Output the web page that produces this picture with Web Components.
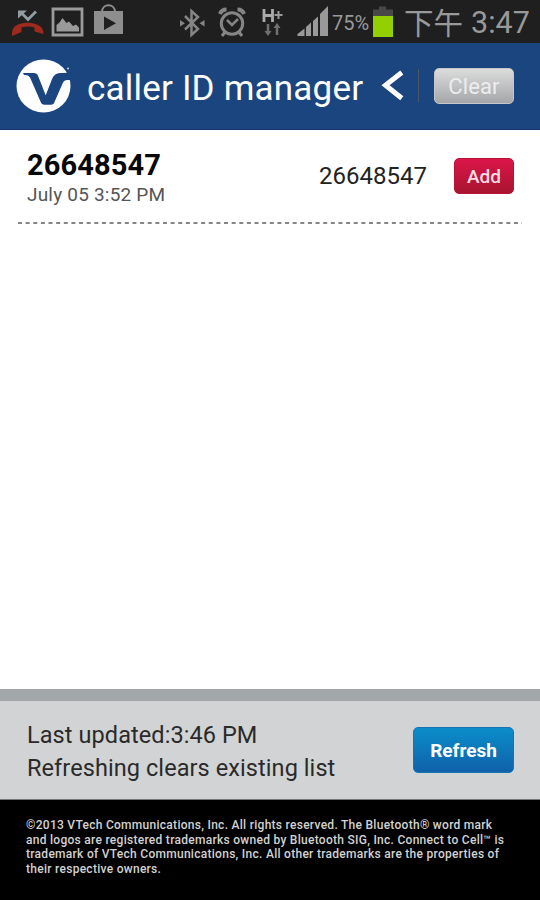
<!DOCTYPE html>
<html lang="en">
<head>
<meta charset="utf-8">
<title>caller ID manager</title>
<style>
body {
    margin: 0;
    background: #fff;
    font-family: Roboto, "Noto Sans CJK TC", sans-serif;
}
</style>
</head>
<body>
<phone-app></phone-app>

<script>
// STATUS BAR
var template_status = document.createElement("template");
template_status.innerHTML = `
<style>
:host {
    display: flex;
    align-items: center;
    justify-content: space-between;
    height: 43px;
    background: #1f1f1f;
    color: #999;
}
svg { display: block; }
.side { display: flex; align-items: center; height: 43px; }
.percent { font-size: 20px; width: 38px; margin-left: 2px; padding-top: 3px; white-space: nowrap; }
.battery { margin-left: 1px; }
.ampm { font-size: 29.5px; line-height: 43px; width: 59px; margin-left: 9px; white-space: nowrap; font-family: "Noto Sans CJK TC", sans-serif; }
.time { font-size: 30.5px; line-height: 43px; width: 60px; margin: 0 9px 0 8px; padding-top: 1px; white-space: nowrap; }
</style>
<div class="side">
    <svg width="130" height="43" viewBox="0 0 130 43">
        <path d="M21 12.500l7 7 8-8" fill="none" stroke="#929da2" stroke-width="2.800"/>
        <path d="M18 10.500h9l-9 8z" fill="#929da2"/>
        <path d="M12 34c0-5 2-8 6-9.500 6-2.300 13-2.300 19 0 4 1.500 6.500 4.500 6.500 9.500l-9-2.500v-4c-4-1.300-9-1.300-13 0v4.500l-9.500 4z" fill="#a0291d"/>
        <path d="M53 9h29v26h-29z" fill="none" stroke="#9a9a9a" stroke-width="2.800"/>
        <path d="M56.500 31.500v-6.500l3-2.500 3-4.500 4 5 2.500-1.500 4 4.500 3-1.500 3 3v4z" fill="#9a9a9a"/>
        <path d="M102 12c0-9 13-9 13 0" fill="none" stroke="#8e8e8e" stroke-width="2"/>
        <path fill-rule="evenodd" d="M94 11h29v23h-29zM104 16.500v13.500l12-6.800z" fill="#8e8e8e"/>
    </svg>
</div>
<div class="side">
    <svg width="150" height="43" viewBox="180 0 150 43">
        <g fill="none" stroke="#858585" stroke-width="2.500">
            <path d="M185 16l13 13-6.500 6v-24l6.500 6-13 12.500"/>
            <circle cx="232" cy="23.500" r="10.700" stroke-width="3"/>
            <path d="M227 20l5 5 6-6" stroke-width="2.500"/>
            <path d="M220 14c1-3 3-4.500 6.500-4.500M244 14c-1-3-3-4.500-6.500-4.500" stroke-width="4"/>
            <path d="M225 32l-3 4M239 32l3 4" stroke-width="3"/>
        </g>
        <path d="M180 20l5 3.300-5 3.300zM204.500 20l-5 3.300 5 3.300z" fill="#858585"/>
        <path d="M264 9v13M272.500 9v13M264 15.500h8.500" stroke="#aaa" stroke-width="2.800"/>
        <path d="M278.500 11v8M274.500 15h8" stroke="#999" stroke-width="2"/>
        <path d="M268 24v9M277 35v-9" stroke="#707070" stroke-width="2.500"/>
        <path d="M264.500 31h7l-3.500 5zM273.500 28h7l-3.500-5z" fill="#707070"/>
        <path d="M297.500 36v-2l7-5.500v7.500zM306 36v-9l5-4.500v13.500zM313 36v-15l5-4.500v19.500zM320 36v-22l8-8v30z" fill="#999"/>
    </svg>
    <span class="percent">75%</span>
    <svg class="battery" width="24" height="43" viewBox="0 0 24 43">
        <path d="M2 9.500h6v-3h7v3h7v7h-20z" fill="#484848"/>
        <path d="M2 16h20v21h-20z" fill="#94d000"/>
    </svg>
    <span class="ampm">下午</span>
    <span class="time">3:47</span>
</div>
`;

class StatusBar extends HTMLElement {
    constructor(){
        super();
        this.attachShadow({mode:"open"})
    }

    connectedCallback(){
        this.shadowRoot.appendChild(template_status.content.cloneNode(true));
    }
}
customElements.define("status-bar", StatusBar)

// BUTTON: kind="clear" | "add" | "refresh"
var template_button = document.createElement("template");
template_button.innerHTML = `
<style>
:host { display: block; flex: none; }
button {
    display: block;
    box-sizing: border-box;
    width: 100%;
    height: 100%;
    margin: 0;
    padding: 0;
    border: none;
    border-radius: 5px;
    color: white;
    font: inherit;
    letter-spacing: inherit;
    white-space: nowrap;
}
:host([kind="clear"]) { width: 80px; height: 36px; font-size: 22px; letter-spacing: 0.1px; }
:host([kind="clear"]) button { background: linear-gradient(#dcdcdc, #a4a6a8); color: #ededed; border: 1px solid #c4c6c9; padding-top: 2px; }
:host([kind="add"]) { width: 60px; height: 36px; font-size: 19px; font-weight: 500; }
:host([kind="add"]) button { background: linear-gradient(#dc1649, #a8142f); color: #fbdde4; border: 1px solid #b81238; }
:host([kind="refresh"]) { width: 101px; height: 46px; font-size: 19px; font-weight: 700; }
:host([kind="refresh"]) button { background: linear-gradient(#0b8dca, #1061a9); border: 1px solid #1474b4; padding-top: 1px; }
</style>
<button><slot></slot></button>
`;

class PushButton extends HTMLElement {
    constructor(){
        super();
        this.attachShadow({mode:"open"})
    }

    connectedCallback(){
        this.shadowRoot.appendChild(template_button.content.cloneNode(true));
    }
}
customElements.define("push-button", PushButton)

// TITLE BAR
var template_title = document.createElement("template");
template_title.innerHTML = `
<style>
:host {
    display: flex;
    align-items: center;
    box-sizing: border-box;
    height: 87px;
    padding: 0 26px 1px 16px;
    background: #1b457e;
    border-bottom: 1px solid #123569;
    color: white;
}
svg { display: block; flex: none; }
.name { width: 277px; margin-left: 15px; font-size: 35px; letter-spacing: 0.2px; line-height: 42px; padding-top: 6px; white-space: nowrap; }
.back { margin-left: 18px; }
.line { width: 2px; height: 33px; margin: 0 15px 0 14px; background: #4c5766; }
</style>
<svg width="56" height="54" viewBox="0 0 56 54">
    <ellipse cx="27.500" cy="27" rx="27" ry="26.500" fill="#fff"/>
    <path d="M7 14h11c2 0 3 .8 4 2.800l7.700 19.500 5.500-14c2-5.500 4-8 9-8.300l11.300-.3v7.300h-4c-2.500 0-3.700 1-4.700 3l-8.300 19c-.8 2-1.500 2.700-3.500 2.700h-6.500c-2 0-3-.8-3.800-2.700l-10-23c-1-2.500-2.500-4-6.700-4z" fill="#1b457e"/>
    <circle cx="52" cy="9.500" r="1" fill="#cbd5e4"/>
</svg>
<span class="name"><slot></slot></span>
<svg class="back" width="23" height="32" viewBox="0 0 23 32">
    <path d="M20.800 2.500l-16.300 12.800 16.300 13" fill="none" stroke="#fff" stroke-width="5"/>
</svg>
<div class="line"></div>
<push-button kind="clear">Clear</push-button>
`;

class TitleBar extends HTMLElement {
    constructor(){
        super();
        this.attachShadow({mode:"open"})
    }

    connectedCallback(){
        this.shadowRoot.appendChild(template_title.content.cloneNode(true));
    }
}
customElements.define("title-bar", TitleBar)

// ONE CALL IN THE LIST
var template_call = document.createElement("template");
template_call.innerHTML = `
<style>
:host { display: block; padding: 0 18px; }
.row { display: flex; align-items: flex-start; height: 91px; padding: 0 8px 0 9px; }
.who { flex: 1; padding-top: 18px; white-space: nowrap; }
.name { font-size: 29px; font-weight: 700; letter-spacing: 0.1px; line-height: 34px; color: #080808; }
.date { font-size: 19px; letter-spacing: 0.2px; line-height: 26px; color: #555; }
.number { font-size: 24px; line-height: 30px; color: #222; margin: 31px 27px 0 0; }
push-button { margin-top: 28px; }
.dots { display: block; }
</style>
<div class="row">
    <div class="who">
        <div class="name"></div>
        <div class="date"><slot name="date"></slot></div>
    </div>
    <span class="number"></span>
    <push-button kind="add">Add</push-button>
</div>
<svg class="dots" width="504" height="4"><path d="M0 2h504" stroke="#858585" stroke-width="2" stroke-dasharray="4 3.630"/></svg>
`;

class CallItem extends HTMLElement {
    constructor(){
        super();
        this.attachShadow({mode:"open"})
    }

    connectedCallback(){
        this.shadowRoot.appendChild(template_call.content.cloneNode(true));
        this.shadowRoot.querySelector(".name").textContent = this.getAttribute("name")
        this.shadowRoot.querySelector(".number").textContent = this.getAttribute("number")
    }
}
customElements.define("call-item", CallItem)

// REFRESH PANEL
var template_refresh = document.createElement("template");
template_refresh.innerHTML = `
<style>
:host {
    display: flex;
    align-items: center;
    justify-content: space-between;
    box-sizing: border-box;
    height: 111px;
    padding: 0 26px 0 27px;
    background: #d1d3d4;
    border-top: 12px solid #a2a8a9;
    border-bottom: 1px solid #777;
}
.info { font-size: 23.5px; letter-spacing: 0.08px; line-height: 33px; color: #2a2a2a; white-space: nowrap; padding-top: 4px; }
</style>
<div class="info">
    <div><slot name="updated"></slot></div>
    <div><slot name="note"></slot></div>
</div>
<push-button kind="refresh">Refresh</push-button>
`;

class RefreshPanel extends HTMLElement {
    constructor(){
        super();
        this.attachShadow({mode:"open"})
    }

    connectedCallback(){
        this.shadowRoot.appendChild(template_refresh.content.cloneNode(true));
    }
}
customElements.define("refresh-panel", RefreshPanel)

// LEGAL TEXT
var template_legal = document.createElement("template");
template_legal.innerHTML = `
<style>
:host {
    display: block;
    box-sizing: border-box;
    height: 100px;
    padding: 18px 0 0 26px;
    background: #000;
    color: #d2d2d2;
    font-size: 12px;
    font-weight: 500;
    letter-spacing: 0.28px;
    line-height: 14.700px;
    white-space: nowrap;
}
</style>
<div>©2013 VTech Communications, Inc. All rights reserved. The Bluetooth® word mark</div>
<div>and logos are registered trademarks owned by Bluetooth SIG, Inc. Connect to Cell™ is</div>
<div>trademark of VTech Communications, Inc. All other trademarks are the properties of</div>
<div>their respective owners.</div>
`;

class LegalNote extends HTMLElement {
    constructor(){
        super();
        this.attachShadow({mode:"open"})
    }

    connectedCallback(){
        this.shadowRoot.appendChild(template_legal.content.cloneNode(true));
    }
}
customElements.define("legal-note", LegalNote)

// WHOLE SCREEN
var template_app = document.createElement("template");
template_app.innerHTML = `
<style>
:host { display: flex; flex-direction: column; width: 540px; height: 900px; overflow: hidden; }
.list { flex: 1; min-height: 0; }
</style>
<status-bar></status-bar>
<title-bar>caller ID manager</title-bar>
<div class="list">
    <call-item name="26648547" number="26648547"><span slot="date">July 05 3:52 PM</span></call-item>
</div>
<refresh-panel>
    <span slot="updated">Last updated:3:46 PM</span>
    <span slot="note">Refreshing clears existing list</span>
</refresh-panel>
<legal-note></legal-note>
`;

class PhoneApp extends HTMLElement {
    constructor(){
        super();
        this.attachShadow({mode:"open"})
    }

    connectedCallback(){
        this.shadowRoot.appendChild(template_app.content.cloneNode(true));
    }
}
customElements.define("phone-app", PhoneApp)
</script>
</body>
</html>
